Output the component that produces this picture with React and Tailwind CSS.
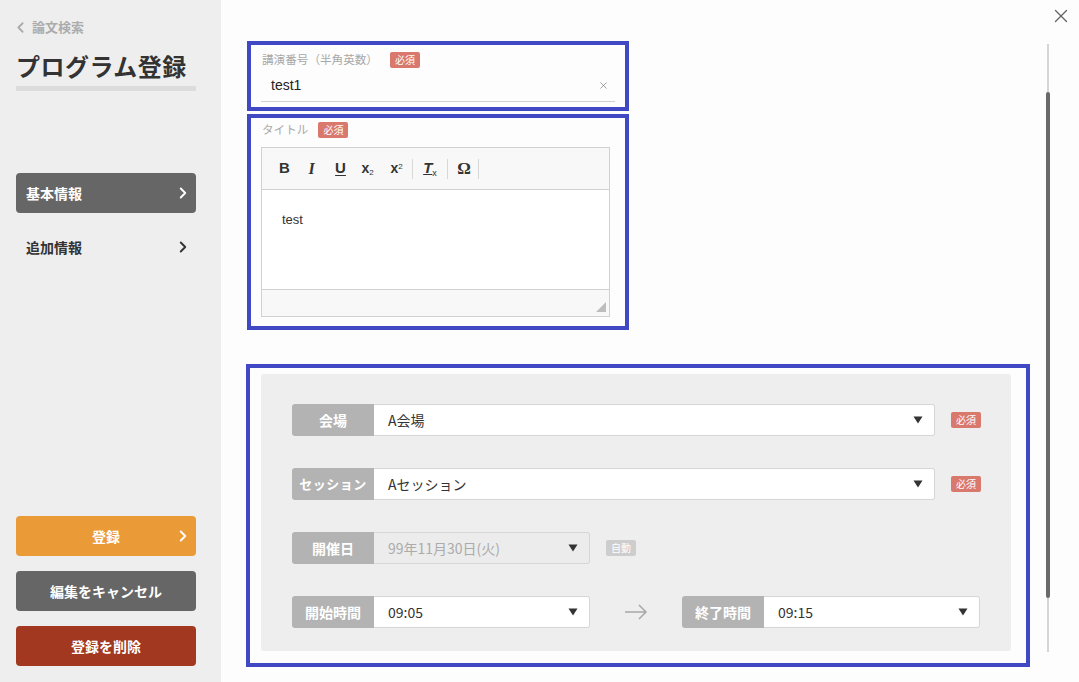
import React from "react";
import { ChevronRight, ChevronLeft, X } from "lucide-react";

const JP = { fontFamily: '"Noto Sans CJK JP", "Noto Sans", sans-serif' };

function Badge({ children, gray }) {
  return (
    <span
      className={`inline-flex items-center justify-center w-[30px] h-[16px] rounded-[2px] text-[10px] leading-none text-white ${gray ? "bg-[#cdcdcd]" : "bg-[#d9786c]"}`}
    >
      {children}
    </span>
  );
}

function Caret() {
  return (
    <svg width="10" height="8" viewBox="0 0 10 8" className="shrink-0">
      <path d="M0.5 0.5 L9.5 0.5 L5 7.5 Z" fill="#333" />
    </svg>
  );
}

function SelectRow({ label, value, width, disabled, labelSmall }) {
  return (
    <div className="flex h-[32px]">
      <div
        className={`w-[82px] shrink-0 flex items-center justify-center rounded-l-[3px] bg-[#b3b3b3] text-white font-bold ${labelSmall ? "text-[13px] tracking-[0.5px]" : "text-[14px]"}`}
      >
        {label}
      </div>
      <div
        className={`flex items-center justify-between pl-[14px] pr-[11px] border border-l-0 border-[#d6d6d6] rounded-r-[3px] text-[14px] ${disabled ? "bg-[#ececec] text-[#ababab]" : "bg-white text-[#333]"}`}
        style={{ width }}
      >
        <span>{value}</span>
        <Caret />
      </div>
    </div>
  );
}

function SideBtn({ children, className, chevron }) {
  return (
    <div className={`relative h-[40px] rounded-[4px] flex items-center justify-center text-white font-bold text-[14px] ${className}`}>
      {children}
      {chevron && (
        <ChevronRight size={18} strokeWidth={2.5} className="absolute right-[4px] top-[11px]" />
      )}
    </div>
  );
}

export default function App() {
  return (
    <div className="flex w-[1079px] h-[682px] overflow-hidden bg-white" style={JP}>
      {/* Sidebar */}
      <aside className="w-[221px] shrink-0 bg-[#eeeeee] px-4 flex flex-col">
        <div className="mt-[18px] h-[18px] flex items-center text-[#ababab] text-[13px] font-bold">
          <ChevronLeft size={17} strokeWidth={2.5} className="-ml-[4px] mr-[3px]" />
          <span>論文検索</span>
        </div>
        <div className="mt-[15px] h-[30px] flex items-center text-[24px] font-bold text-[#333] tracking-[0.5px] leading-none">
          プログラム登録
        </div>
        <div className="mt-[5px] h-[5px] w-[180px] bg-[#dcdcdc]" />
        <div className="mt-[82px] w-[180px]">
          <div className="relative h-[40px] rounded-[4px] bg-[#666666] flex items-center pl-[10px] text-white font-bold text-[14px]">
            基本情報
            <ChevronRight size={18} strokeWidth={2.5} className="absolute right-[4px] top-[11px]" />
          </div>
          <div className="relative mt-[14px] h-[40px] flex items-center pl-[10px] text-[#333] font-bold text-[14px]">
            追加情報
            <ChevronRight size={18} strokeWidth={2.5} className="absolute right-[4px] top-[11px]" />
          </div>
        </div>
        <div className="mt-auto mb-[16px] w-[180px] flex flex-col gap-[15px]">
          <SideBtn className="bg-[#ea9a36]" chevron>登録</SideBtn>
          <SideBtn className="bg-[#666666]">編集をキャンセル</SideBtn>
          <SideBtn className="bg-[#a2381f]">登録を削除</SideBtn>
        </div>
      </aside>

      {/* Main */}
      <main className="relative flex-1 bg-[#fdfdfd]">
        <div className="pl-[26px] pt-[41px]">
          {/* Box 1 */}
          <div className="w-[382px] h-[70px] border-4 border-[#4048c4] px-[10px] pt-[7px]">
            <div className="flex items-center h-[16px] gap-[12px]">
              <span className="text-[11.6px] text-[#a8a8a8] ml-[1px]">講演番号（半角英数）</span>
              <Badge>必須</Badge>
            </div>
            <div className="h-[34px] flex items-center justify-between border-b border-[#d0d0d0] pl-[10px] pr-[6px] pt-[2px]">
              <span className="text-[14px] text-[#222]" style={{ fontFamily: '"Liberation Sans", Arial, sans-serif' }}>test1</span>
              <X size={11} strokeWidth={1.5} className="text-[#777]" />
            </div>
          </div>

          {/* Box 2 */}
          <div className="mt-[3px] w-[382px] h-[216px] border-4 border-[#4048c4] px-[10px] pt-[4px]">
            <div className="flex items-center h-[16px] gap-[10px]">
              <span className="text-[11.6px] text-[#a8a8a8] ml-[1px]">タイトル</span>
              <Badge>必須</Badge>
            </div>
            <div className="mt-[9px] w-[349px] h-[170px] border border-[#d1d1d1] flex flex-col">
              <div className="h-[42px] bg-[#f8f8f8] border-b border-[#d1d1d1] flex items-center pl-[11px] text-[#333]" style={{ fontFamily: '"Liberation Sans", Arial, sans-serif' }}>
                <span className="w-[23px] text-center font-bold text-[15px]">B</span>
                <span className="ml-[4px] w-[23px] text-center font-bold italic text-[16px]" style={{ fontFamily: '"Liberation Serif", serif' }}>I</span>
                <span className="ml-[6px] w-[23px] text-center font-bold text-[15px] underline underline-offset-2">U</span>
                <span className="ml-[4px] w-[23px] text-center font-bold text-[14px]">x<sub className="text-[8px] font-normal">2</sub></span>
                <span className="ml-[6px] w-[23px] text-center font-bold text-[14px]">x<sup className="text-[8px] font-normal">2</sup></span>
                <span className="ml-[4px] h-[20px] w-px bg-[#d8d8d8]" />
                <span className="ml-[6px] w-[22px] text-center font-bold italic text-[15px]"><span className="underline">T</span><sub className="text-[9px] not-italic font-normal">x</sub></span>
                <span className="ml-[6px] h-[20px] w-px bg-[#d8d8d8]" />
                <span className="ml-[6px] w-[20px] text-center font-bold text-[17px]" style={{ fontFamily: '"Liberation Serif", serif' }}>Ω</span>
                <span className="ml-[4px] h-[20px] w-px bg-[#d8d8d8]" />
              </div>
              <div className="flex-1 bg-white pl-[20px] pt-[20px] text-[13px] text-[#333]" style={{ fontFamily: '"Liberation Sans", Arial, sans-serif' }}>
                test
              </div>
              <div className="h-[27px] bg-[#f8f8f8] border-t border-[#d1d1d1] flex items-end justify-end pr-[3px] pb-[4px]">
                <svg width="10" height="10" viewBox="0 0 10 10">
                  <path d="M10 0 L10 10 L0 10 Z" fill="#bdbdbd" />
                </svg>
              </div>
            </div>
          </div>

          {/* Box 3 */}
          <div className="mt-[34px] -ml-[1px] w-[784px] h-[303px] border-4 border-[#4048c4] pl-[11px] pr-[15px] pt-[6px] pb-[12px]">
            <div className="h-full bg-[#eeeeee] rounded-[3px] pl-[31px] pt-[30px] flex flex-col gap-[32px]">
              <div className="flex items-center gap-[16px]">
                <SelectRow label="会場" value="A会場" width={561} />
                <Badge>必須</Badge>
              </div>
              <div className="flex items-center gap-[16px]">
                <SelectRow label="セッション" value="Aセッション" width={561} labelSmall />
                <Badge>必須</Badge>
              </div>
              <div className="flex items-center gap-[16px]">
                <SelectRow label="開催日" value="99年11月30日(火)" width={216} disabled />
                <Badge gray>自動</Badge>
              </div>
              <div className="flex items-center">
                <SelectRow label="開始時間" value="09:05" width={216} />
                <div className="w-[92px] flex justify-center">
                  <svg width="24" height="16" viewBox="0 0 24 16">
                    <path d="M1 8 H22 M15 1 L22 8 L15 15" stroke="#a8a8a8" strokeWidth="1.5" fill="none" />
                  </svg>
                </div>
                <SelectRow label="終了時間" value="09:15" width={216} />
              </div>
            </div>
          </div>
        </div>

        {/* Close */}
        <X size={22} strokeWidth={1.5} className="absolute left-[829px] top-[5px] text-[#666]" />
        {/* Scrollbar */}
        <div className="absolute left-[826px] top-[44px] w-[2px] h-[608px] bg-[#d6d6d6]" />
        <div className="absolute left-[825px] top-[92px] w-[4px] h-[506px] rounded-[2px] bg-[#6a6a6a]" />
      </main>
    </div>
  );
}
